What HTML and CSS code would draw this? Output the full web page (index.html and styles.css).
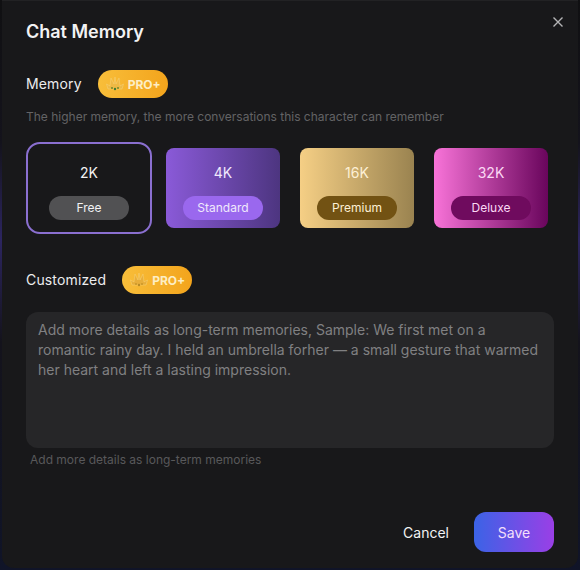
FILE: index.html
```html
<!DOCTYPE html>
<html lang="en">

<head>
    <meta charset="UTF-8">
    <meta name="viewport" content="width=device-width, initial-scale=1.0">
    <title>Chat Memory</title>
    <link rel="stylesheet" href="styles.css">
</head>

<body>
    <div class="modal">
        <button class="close" aria-label="Close">
            <svg width="12" height="12" viewBox="0 0 12 12"><path d="M1.500 1.500l9 9M10.500 1.500l-9 9" stroke="#b4b4b6" stroke-width="1.400" fill="none"/></svg>
        </button>
        <h1 class="title">Chat Memory</h1>

        <div class="label-row">
            <span class="label">Memory</span>
            <span class="pro">
                <svg class="crown" width="20" height="18" viewBox="0 0 20 18"><path d="M3 14L1.500 9l3.500 2L6 3l3 6 1-7 1 7 3-6 1 8 3.500-2L17 14z" fill="#eeb945" stroke="#f7d27a" stroke-width=".5"/><circle cx="7" cy="13" r="1" fill="#6e8a2c"/><circle cx="10" cy="14" r="1.200" fill="#3f7a32"/><circle cx="13" cy="13" r="1" fill="#6e8a2c"/></svg>
                PRO+
            </span>
        </div>
        <p class="desc">The higher memory, the more conversations this character can remember</p>

        <div class="cards">
            <div class="card free selected">
                <div class="size">2K</div>
                <div class="tier">Free</div>
            </div>
            <div class="card standard">
                <div class="size">4K</div>
                <div class="tier">Standard</div>
            </div>
            <div class="card premium">
                <div class="size">16K</div>
                <div class="tier">Premium</div>
            </div>
            <div class="card deluxe">
                <div class="size">32K</div>
                <div class="tier">Deluxe</div>
            </div>
        </div>

        <div class="label-row custom-row">
            <span class="label">Customized</span>
            <span class="pro">
                <svg class="crown" width="20" height="18" viewBox="0 0 20 18"><path d="M3 14L1.500 9l3.500 2L6 3l3 6 1-7 1 7 3-6 1 8 3.500-2L17 14z" fill="#e8ae3a" stroke="#f7d27a" stroke-width=".5"/><circle cx="7" cy="13" r="1" fill="#c9962a"/><circle cx="10" cy="14" r="1.200" fill="#b98a24"/><circle cx="13" cy="13" r="1" fill="#c9962a"/></svg>
                PRO+
            </span>
        </div>
        <div class="memo">Add more details as long-term memories, Sample: We first met on a romantic rainy day. I held an umbrella forher — a small gesture that warmed her heart and left a lasting impression.</div>
        <p class="hint">Add more details as long-term memories</p>

        <div class="actions">
            <button class="cancel">Cancel</button>
            <button class="save">Save</button>
        </div>
    </div>
</body>

</html>
```

FILE: styles.css
```css
* {
    box-sizing: border-box;
}

body {
    margin: 0;
    width: 580px;
    height: 570px;
    overflow: hidden;
    font-family: Inter, "Liberation Sans", sans-serif;
    color: #f2f2f3;
    background: linear-gradient(180deg, #101012 0%, #14131c 25%, #2c2560 42%, #14131c 60%, #101428 100%);
}

.modal {
    position: relative;
    width: 576px;
    height: 568px;
    margin-left: 2px;
    padding: 19px 24px 0;
    background: #18181a;
    border-top: 1px solid #222224;
    border-radius: 0 0 12px 12px;
}

.close {
    position: absolute;
    top: 15px;
    right: 14px;
    width: 12px;
    height: 12px;
    padding: 0;
    border: 0;
    background: none;
    line-height: 0;
}

.title {
    margin: 0;
    font-size: 18px;
    line-height: 24px;
    font-weight: 600;
}

.label-row {
    display: flex;
    align-items: center;
    gap: 16px;
    margin-top: 26px;
}

.custom-row {
    margin-top: 38px;
}

.label {
    font-size: 14px;
    line-height: 28px;
    letter-spacing: .15px;
    color: #ececee;
}

.pro {
    display: flex;
    align-items: center;
    justify-content: center;
    gap: 3px;
    width: 70px;
    height: 28px;
    border-radius: 14px;
    background: linear-gradient(90deg, #f8be3a, #f3a41c);
    color: #fdeec4;
    font-size: 12px;
    font-weight: 700;
}

.desc {
    margin: 11px 0 0;
    font-size: 12px;
    line-height: 16px;
    color: #636365;
}

.cards {
    display: flex;
    gap: 20px;
    margin: 23px 0 0 6px;
}

.card {
    display: flex;
    flex-direction: column;
    align-items: center;
    width: 114px;
    height: 80px;
    padding-top: 15px;
    border-radius: 8px;
}

.selected {
    outline: 2px solid #8a6fd0;
    outline-offset: 4px;
}

.size {
    font-size: 14px;
    line-height: 20px;
}

.tier {
    width: 80px;
    height: 24px;
    margin-top: 13px;
    border-radius: 12px;
    font-size: 12px;
    line-height: 24px;
    text-align: center;
}

.free .tier {
    background: #515153;
}

.standard {
    background: linear-gradient(90deg, #8a5ad8, #4d3580);
    color: #f0e8fc;
}

.standard .tier {
    background: #9a68ee;
}

.premium {
    background: linear-gradient(90deg, #f5cf85, #9a8350);
    color: #fdf0d5;
}

.premium .tier {
    background: #725213;
}

.deluxe {
    background: linear-gradient(90deg, #f873d8, #69055c);
    color: #fbd8f4;
}

.deluxe .tier {
    background: #6f0b5e;
}

.memo {
    height: 136px;
    margin-top: 18px;
    padding: 8px 12px;
    border-radius: 12px;
    background: #262628;
    font-size: 14px;
    line-height: 20px;
    color: #808082;
}

.hint {
    margin: 4px 0 0 4px;
    font-size: 12px;
    line-height: 16px;
    color: #58585a;
}

.actions {
    display: flex;
    justify-content: flex-end;
    align-items: center;
    gap: 25px;
    margin-top: 44px;
}

.actions button {
    border: 0;
    font-family: inherit;
    font-size: 14px;
    color: #f2f2f3;
}

.cancel {
    padding: 0;
    background: none;
}

.actions .save {
    width: 80px;
    height: 40px;
    border-radius: 12px;
    background: linear-gradient(90deg, #3b63e6, #9a3fe6);
    color: #f3dffb;
}
```
